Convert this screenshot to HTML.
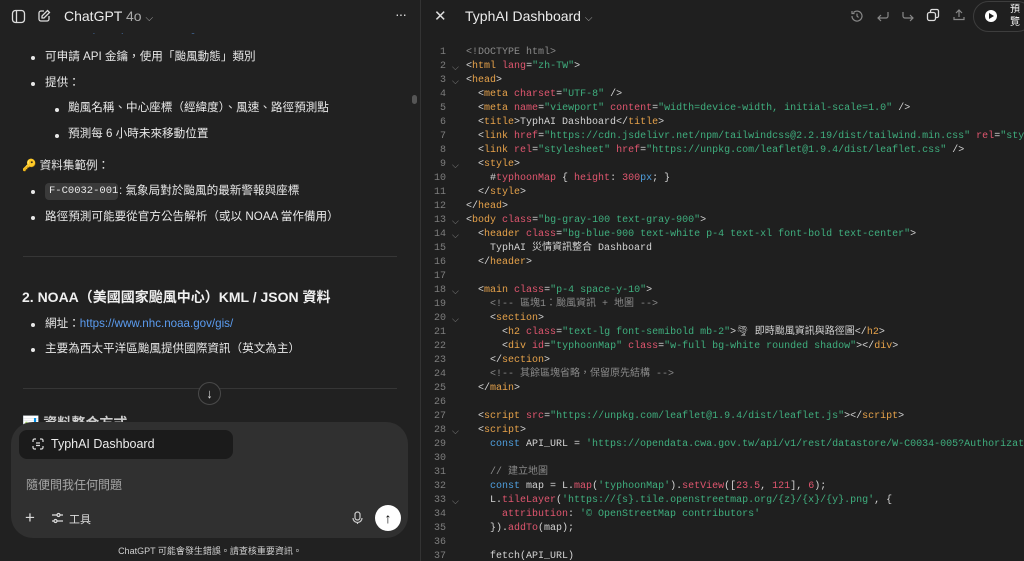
<!DOCTYPE html>
<html><head><meta charset="utf-8"><style>
*{margin:0;padding:0;box-sizing:border-box}
body{width:1024px;height:561px;overflow:hidden;background:#212121;font-family:"Liberation Sans","Noto Sans CJK TC",sans-serif;color:#ececec;position:relative}
.a{position:absolute;white-space:nowrap}
#L{position:absolute;left:0;top:0;width:420px;height:561px;background:#212121;overflow:hidden}
#R{position:absolute;left:420px;top:0;width:604px;height:561px;background:#1f1f1f;border-left:1px solid #333;overflow:hidden}
.t{font-size:11.6px;line-height:16px;color:#e8e8e8}
.dot{position:absolute;width:4px;height:4px;border-radius:2px;background:#e8e8e8}
.code{font-family:"Liberation Mono","Noto Sans CJK TC",monospace;font-size:10px}
.ln{position:absolute;left:0;width:25px;text-align:right;color:#7d7d7d;font-family:"Liberation Mono",monospace;font-size:10px;line-height:14px}
.cl{position:absolute;left:45px;white-space:pre;color:#d4d4d4;font-family:"Liberation Mono","Noto Sans CJK TC",monospace;font-size:10px;line-height:14px;height:14px}
.fd{position:absolute;left:31px;color:#888;font-size:9px;line-height:14px}
.g{color:#e6a24a}.r{color:#e0566f}.s{color:#3fae7e}.c{color:#8a8a8a}.b{color:#4f9fde}.p{color:#d4d4d4}
</style></head><body>
<div id="L">
 <div class="a t" style="left:45px;top:20px;color:#aaa">網址：<span style="color:#5b9cf0">https://opendata.cwa.gov.tw/index</span></div>
 <div class="a" style="left:0;top:0;width:420px;height:33px;background:#212121"></div>
 <svg class="a" style="left:11px;top:9px" width="15" height="15" viewBox="0 0 15 15" fill="none" stroke="#ddd" stroke-width="1.3"><rect x="1.5" y="1.5" width="12" height="12" rx="3"/><line x1="5.5" y1="1.5" x2="5.5" y2="13.5"/></svg>
 <svg class="a" style="left:37px;top:9px" width="14" height="14" viewBox="0 0 14 14" fill="none" stroke="#ddd" stroke-width="1.3"><path d="M7 2H4a2 2 0 0 0-2 2v6a2 2 0 0 0 2 2h6a2 2 0 0 0 2-2V7"/><path d="M10.5 1.5l2 2L7 9H5V7z"/></svg>
 <div class="a" style="left:64px;top:8px;font-size:14px;color:#ececec">ChatGPT <span style="color:#aaa">4o</span> <span style="color:#aaa;font-size:10px">⌵</span></div>
 <div class="a" style="left:395px;top:6px;font-size:14px;color:#ddd;letter-spacing:-1px">···</div>
 <div class="dot" style="left:31px;top:56px"></div><div class="a t" style="left:45px;top:49px">可申請 API 金鑰，使用「颱風動態」類別</div>
 <div class="dot" style="left:31px;top:82px"></div><div class="a t" style="left:45px;top:75px">提供：</div>
 <div class="dot" style="left:55px;top:108px"></div><div class="a t" style="left:68px;top:100px">颱風名稱、中心座標（經緯度）、風速、路徑預測點</div>
 <div class="dot" style="left:55px;top:134px"></div><div class="a t" style="left:68px;top:126px">預測每 6 小時未來移動位置</div>
 <div class="a t" style="left:22px;top:158px">🔑 資料集範例：</div>
 <div class="dot" style="left:31px;top:190px"></div><div class="a" style="left:45px;top:183px;width:73px;height:17px;background:#3a3a3a;border-radius:4px"></div>
 <div class="a code" style="left:49px;top:185px;color:#e8e8e8;font-size:10.5px;line-height:13px">F-C0032-001</div><div class="a t" style="left:119px;top:183px">: 氣象局對於颱風的最新警報與座標</div>
 <div class="dot" style="left:31px;top:216px"></div><div class="a t" style="left:45px;top:209px">路徑預測可能要從官方公告解析（或以 NOAA 當作備用）</div>
 <div class="a" style="left:23px;top:256px;width:374px;height:1px;background:#363636"></div>
 <div class="a" style="left:22px;top:289px;font-size:14px;line-height:17px;font-weight:bold;color:#f0f0f0">2. NOAA（美國國家颱風中心）KML / JSON 資料</div>
 <div class="dot" style="left:31px;top:323px"></div><div class="a t" style="left:45px;top:316px">網址：<span style="color:#5b9cf0">https://www.nhc.noaa.gov/gis/</span></div>
 <div class="dot" style="left:31px;top:348px"></div><div class="a t" style="left:45px;top:341px">主要為西太平洋區颱風提供國際資訊（英文為主）</div>
 <div class="a" style="left:23px;top:388px;width:374px;height:1px;background:#363636"></div>
 <div class="a" style="left:198px;top:382px;width:23px;height:23px;border-radius:50%;border:1px solid #4a4a4a;background:#212121;color:#ddd;font-size:13px;text-align:center;line-height:21px">↓</div>
 <div class="a" style="left:22px;top:413px;font-size:14px;font-weight:bold;color:#ccc">📊 資料整合方式</div>
 <div class="a" style="left:11px;top:422px;width:397px;height:116px;background:#303030;border-radius:22px"></div>
 <div class="a" style="left:19px;top:430px;width:214px;height:29px;background:#1b1b1b;border-radius:8px"></div>
 <svg class="a" style="left:32px;top:438px" width="12" height="12" viewBox="0 0 12 12" fill="none" stroke="#ddd" stroke-width="1.2"><path d="M1 4V2.5A1.5 1.5 0 0 1 2.5 1H4M8 1h1.5A1.5 1.5 0 0 1 11 2.5V4M11 8v1.5A1.5 1.5 0 0 1 9.5 11H8M4 11H2.5A1.5 1.5 0 0 1 1 9.5V8M4 5h4M4 7.5h4"/></svg>
 <div class="a" style="left:51px;top:437px;font-size:12.5px;color:#ececec">TyphAI Dashboard</div>
 <div class="a" style="left:26px;top:476px;font-size:12px;color:#a8a8a8">隨便問我任何問題</div>
 <div class="a" style="left:25px;top:508px;font-size:17px;color:#ddd">+</div>
 <svg class="a" style="left:51px;top:512px" width="13" height="12" viewBox="0 0 13 12" fill="none" stroke="#ddd" stroke-width="1.2"><path d="M1 3h5M9 3h3M1 9h2M6 9h6"/><circle cx="7.5" cy="3" r="1.5"/><circle cx="4.5" cy="9" r="1.5"/></svg>
 <div class="a" style="left:69px;top:511px;font-size:11px;color:#ddd">工具</div>
 <svg class="a" style="left:352px;top:511px" width="11" height="14" viewBox="0 0 11 14" fill="none" stroke="#ccc" stroke-width="1.2"><rect x="3" y="1" width="5" height="8" rx="2.5"/><path d="M1 7a4.5 4.5 0 0 0 9 0M5.5 11.5V13"/></svg>
 <div class="a" style="left:375px;top:505px;width:26px;height:26px;border-radius:50%;background:#fff;color:#000;text-align:center;font-size:14px;font-weight:bold;line-height:26px">↑</div>
 <div class="a" style="left:0;top:544px;width:420px;text-align:center;font-size:9px;color:#cfcfcf">ChatGPT 可能會發生錯誤。請查核重要資訊。</div>
 <div class="a" style="left:412px;top:95px;width:5px;height:9px;border-radius:3px;background:#555"></div>
</div>
<div id="R">
 <div class="a" style="left:13px;top:7px;font-size:15px;color:#ddd">✕</div>
 <div class="a" style="left:44px;top:8px;font-size:14px;color:#ececec">TyphAI Dashboard <span style="color:#aaa;font-size:10px">⌵</span></div>
 <svg class="a" style="left:429px;top:9px" width="14" height="14" viewBox="0 0 14 14" fill="none" stroke="#888" stroke-width="1.2"><path d="M2 7a5 5 0 1 0 1.5-3.5M2 2v2.5h2.5M7 4.5V7l1.5 1.5"/></svg>
 <svg class="a" style="left:455px;top:9px" width="14" height="14" viewBox="0 0 14 14" fill="none" stroke="#888" stroke-width="1.2"><path d="M12 3v4a2 2 0 0 1-2 2H2M5 6L2 9l3 3"/></svg>
 <svg class="a" style="left:480px;top:9px" width="14" height="14" viewBox="0 0 14 14" fill="none" stroke="#888" stroke-width="1.2"><path d="M2 3v4a2 2 0 0 0 2 2h8M9 6l3 3-3 3"/></svg>
 <svg class="a" style="left:505px;top:8px" width="14" height="14" viewBox="0 0 14 14" fill="none" stroke="#ddd" stroke-width="1.3"><rect x="1.5" y="4.5" width="8" height="8" rx="2"/><path d="M4.5 4.5V3a1.5 1.5 0 0 1 1.5-1.5h5A1.5 1.5 0 0 1 12.5 3v5a1.5 1.5 0 0 1-1.5 1.5H9.5"/></svg>
 <svg class="a" style="left:531px;top:8px" width="14" height="14" viewBox="0 0 14 14" fill="none" stroke="#888" stroke-width="1.2"><path d="M7 9V2M4 5l3-3 3 3M2 9v2.5h10V9"/></svg>
 <div class="a" style="left:552px;top:1px;width:60px;height:31px;border:1px solid #3d3d3d;border-radius:16px"></div>
 <div class="a" style="left:564px;top:10px;width:12px;height:12px;border-radius:50%;background:#fff"></div>
 <div class="a" style="left:568px;top:13px;width:0;height:0;border-left:5px solid #1f1f1f;border-top:3px solid transparent;border-bottom:3px solid transparent"></div>
 <div class="a" style="left:589px;top:3px;font-size:10px;line-height:13px;color:#eee;white-space:normal;width:11px">預覽</div>

 <div class="ln" style="top:46px">1</div><div class="cl" style="top:46px"><span class="c">&lt;!DOCTYPE html&gt;</span></div>
 <div class="ln" style="top:60px">2</div><div class="fd" style="top:60px">⌵</div><div class="cl" style="top:60px">&lt;<span class="g">html</span> <span class="r">lang</span>=<span class="s">"zh-TW"</span>&gt;</div>
 <div class="ln" style="top:74px">3</div><div class="fd" style="top:74px">⌵</div><div class="cl" style="top:74px">&lt;<span class="g">head</span>&gt;</div>
 <div class="ln" style="top:88px">4</div><div class="cl" style="top:88px">  &lt;<span class="g">meta</span> <span class="r">charset</span>=<span class="s">"UTF-8"</span> /&gt;</div>
 <div class="ln" style="top:102px">5</div><div class="cl" style="top:102px">  &lt;<span class="g">meta</span> <span class="r">name</span>=<span class="s">"viewport"</span> <span class="r">content</span>=<span class="s">"width=device-width, initial-scale=1.0"</span> /&gt;</div>
 <div class="ln" style="top:116px">6</div><div class="cl" style="top:116px">  &lt;<span class="g">title</span>&gt;TyphAI Dashboard&lt;/<span class="g">title</span>&gt;</div>
 <div class="ln" style="top:130px">7</div><div class="cl" style="top:130px">  &lt;<span class="g">link</span> <span class="r">href</span>=<span class="s">"https://cdn.jsdelivr.net/npm/tailwindcss@2.2.19/dist/tailwind.min.css"</span> <span class="r">rel</span>=<span class="s">"stylesheet"</span></div>
 <div class="ln" style="top:144px">8</div><div class="cl" style="top:144px">  &lt;<span class="g">link</span> <span class="r">rel</span>=<span class="s">"stylesheet"</span> <span class="r">href</span>=<span class="s">"https://unpkg.com/leaflet@1.9.4/dist/leaflet.css"</span> /&gt;</div>
 <div class="ln" style="top:158px">9</div><div class="fd" style="top:158px">⌵</div><div class="cl" style="top:158px">  &lt;<span class="g">style</span>&gt;</div>
 <div class="ln" style="top:172px">10</div><div class="cl" style="top:172px">    #<span class="r">typhoonMap</span> { <span class="r">height</span>: <span class="r">300</span><span class="b">px</span>; }</div>
 <div class="ln" style="top:186px">11</div><div class="cl" style="top:186px">  &lt;/<span class="g">style</span>&gt;</div>
 <div class="ln" style="top:200px">12</div><div class="cl" style="top:200px">&lt;/<span class="g">head</span>&gt;</div>
 <div class="ln" style="top:214px">13</div><div class="fd" style="top:214px">⌵</div><div class="cl" style="top:214px">&lt;<span class="g">body</span> <span class="r">class</span>=<span class="s">"bg-gray-100 text-gray-900"</span>&gt;</div>
 <div class="ln" style="top:228px">14</div><div class="fd" style="top:228px">⌵</div><div class="cl" style="top:228px">  &lt;<span class="g">header</span> <span class="r">class</span>=<span class="s">"bg-blue-900 text-white p-4 text-xl font-bold text-center"</span>&gt;</div>
 <div class="ln" style="top:242px">15</div><div class="cl" style="top:242px">    TyphAI 災情資訊整合 Dashboard</div>
 <div class="ln" style="top:256px">16</div><div class="cl" style="top:256px">  &lt;/<span class="g">header</span>&gt;</div>
 <div class="ln" style="top:270px">17</div>
 <div class="ln" style="top:284px">18</div><div class="fd" style="top:284px">⌵</div><div class="cl" style="top:284px">  &lt;<span class="g">main</span> <span class="r">class</span>=<span class="s">"p-4 space-y-10"</span>&gt;</div>
 <div class="ln" style="top:298px">19</div><div class="cl" style="top:298px"><span class="c">    &lt;!-- 區塊1：颱風資訊 + 地圖 --&gt;</span></div>
 <div class="ln" style="top:312px">20</div><div class="fd" style="top:312px">⌵</div><div class="cl" style="top:312px">    &lt;<span class="g">section</span>&gt;</div>
 <div class="ln" style="top:326px">21</div><div class="cl" style="top:326px">      &lt;<span class="g">h2</span> <span class="r">class</span>=<span class="s">"text-lg font-semibold mb-2"</span>&gt;🌪 即時颱風資訊與路徑圖&lt;/<span class="g">h2</span>&gt;</div>
 <div class="ln" style="top:340px">22</div><div class="cl" style="top:340px">      &lt;<span class="g">div</span> <span class="r">id</span>=<span class="s">"typhoonMap"</span> <span class="r">class</span>=<span class="s">"w-full bg-white rounded shadow"</span>&gt;&lt;/<span class="g">div</span>&gt;</div>
 <div class="ln" style="top:354px">23</div><div class="cl" style="top:354px">    &lt;/<span class="g">section</span>&gt;</div>
 <div class="ln" style="top:368px">24</div><div class="cl" style="top:368px"><span class="c">    &lt;!-- 其餘區塊省略，保留原先結構 --&gt;</span></div>
 <div class="ln" style="top:382px">25</div><div class="cl" style="top:382px">  &lt;/<span class="g">main</span>&gt;</div>
 <div class="ln" style="top:396px">26</div>
 <div class="ln" style="top:410px">27</div><div class="cl" style="top:410px">  &lt;<span class="g">script</span> <span class="r">src</span>=<span class="s">"https://unpkg.com/leaflet@1.9.4/dist/leaflet.js"</span>&gt;&lt;/<span class="g">script</span>&gt;</div>
 <div class="ln" style="top:424px">28</div><div class="fd" style="top:424px">⌵</div><div class="cl" style="top:424px">  &lt;<span class="g">script</span>&gt;</div>
 <div class="ln" style="top:438px">29</div><div class="cl" style="top:438px">    <span class="b">const</span> API_URL = <span class="s">'https://opendata.cwa.gov.tw/api/v1/rest/datastore/W-C0034-005?Authorization</span></div>
 <div class="ln" style="top:452px">30</div>
 <div class="ln" style="top:466px">31</div><div class="cl" style="top:466px"><span class="c">    // 建立地圖</span></div>
 <div class="ln" style="top:480px">32</div><div class="cl" style="top:480px">    <span class="b">const</span> map = L.<span class="r">map</span>(<span class="s">'typhoonMap'</span>).<span class="r">setView</span>([<span class="r">23.5</span>, <span class="r">121</span>], <span class="r">6</span>);</div>
 <div class="ln" style="top:494px">33</div><div class="fd" style="top:494px">⌵</div><div class="cl" style="top:494px">    L.<span class="r">tileLayer</span>(<span class="s">'https://{s}.tile.openstreetmap.org/{z}/{x}/{y}.png'</span>, {</div>
 <div class="ln" style="top:508px">34</div><div class="cl" style="top:508px">      <span class="r">attribution</span>: <span class="s">'© OpenStreetMap contributors'</span></div>
 <div class="ln" style="top:522px">35</div><div class="cl" style="top:522px">    }).<span class="r">addTo</span>(map);</div>
 <div class="ln" style="top:536px">36</div>
 <div class="ln" style="top:550px">37</div><div class="cl" style="top:550px">    fetch(API_URL)</div>
</div>
</body></html>
